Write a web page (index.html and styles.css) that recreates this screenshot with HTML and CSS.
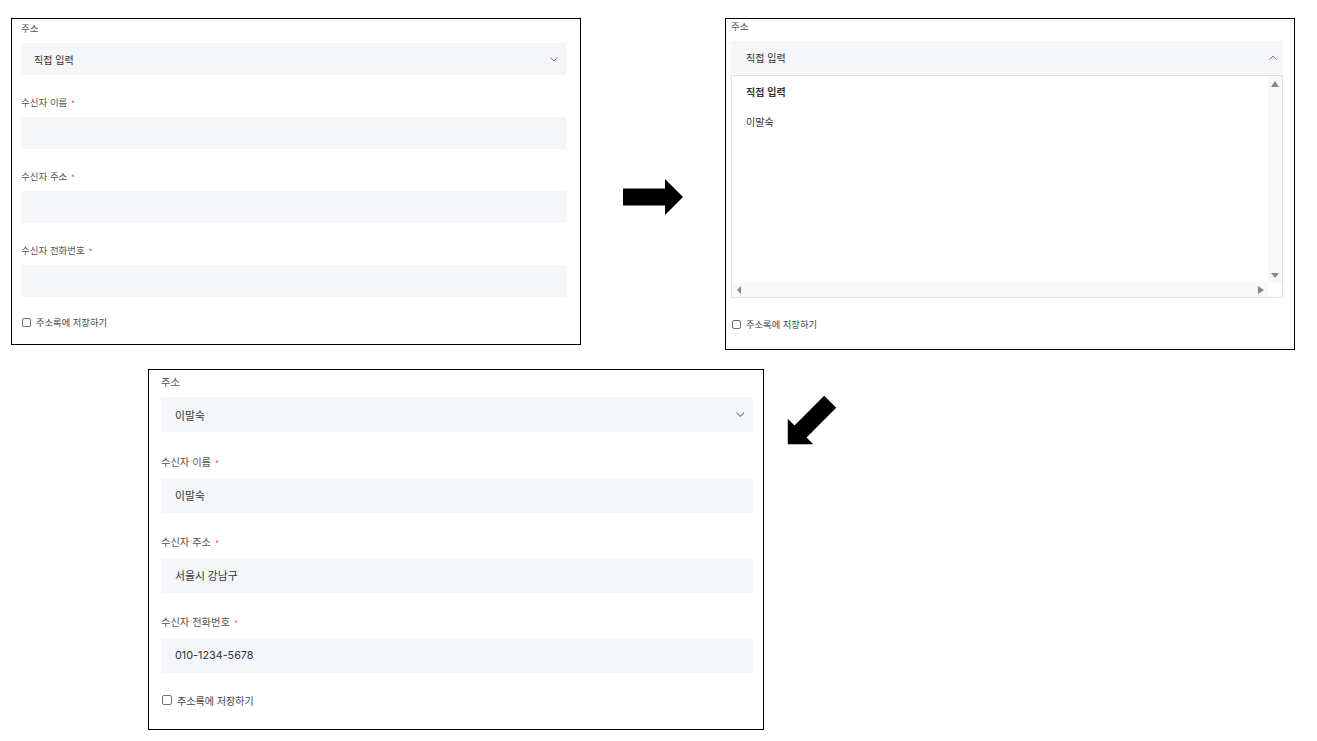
FILE: index.html
```html
<!DOCTYPE html>
<html lang="ko">
<head>
<meta charset="utf-8">
<title>주소 선택 흐름</title>
<link rel="stylesheet" href="styles.css">
</head>
<body>
<div class="canvas">

  <section class="panel p1">
    <div class="group">
      <div class="lbl">주소</div>
      <div class="field select"><span>직접 입력</span>
        <svg class="chev" viewBox="0 0 8 5"><polyline points="0.5,0.5 4,4 7.5,0.5"/></svg>
      </div>
    </div>
    <div class="group">
      <div class="lbl">수신자 이름 <span class="req">*</span></div>
      <div class="field"></div>
    </div>
    <div class="group">
      <div class="lbl">수신자 주소 <span class="req">*</span></div>
      <div class="field"></div>
    </div>
    <div class="group">
      <div class="lbl">수신자 전화번호 <span class="req">*</span></div>
      <div class="field"></div>
    </div>
    <div class="check"><span class="box"></span><span>주소록에 저장하기</span></div>
  </section>

  <section class="panel p2">
    <div class="group">
      <div class="lbl">주소</div>
      <div class="field select"><span>직접 입력</span>
        <svg class="chev" viewBox="0 0 8 5"><polyline points="0.5,4.5 4,1 7.5,4.5"/></svg>
      </div>
    </div>
    <div class="listbox">
      <div class="list-main">
        <div class="list-items">
          <div class="opt sel">직접 입력</div>
          <div class="opt">이말숙</div>
        </div>
        <div class="vbar">
          <span class="tri up"></span>
          <span class="tri down"></span>
        </div>
      </div>
      <div class="hrow">
        <div class="hbar">
          <span class="tri left"></span>
          <span class="tri right"></span>
        </div>
        <div class="corner"></div>
      </div>
    </div>
    <div class="check"><span class="box"></span><span>주소록에 저장하기</span></div>
  </section>

  <section class="panel p3">
    <div class="group">
      <div class="lbl">주소</div>
      <div class="field select"><span>이말숙</span>
        <svg class="chev" viewBox="0 0 8 5"><polyline points="0.5,0.5 4,4 7.5,0.5"/></svg>
      </div>
    </div>
    <div class="group">
      <div class="lbl">수신자 이름 <span class="req">*</span></div>
      <div class="field"><span>이말숙</span></div>
    </div>
    <div class="group">
      <div class="lbl">수신자 주소 <span class="req">*</span></div>
      <div class="field"><span>서울시 강남구</span></div>
    </div>
    <div class="group">
      <div class="lbl">수신자 전화번호 <span class="req">*</span></div>
      <div class="field"><span>010-1234-5678</span></div>
    </div>
    <div class="check"><span class="box"></span><span>주소록에 저장하기</span></div>
  </section>

  <svg class="arrow a1" width="62" height="37" viewBox="0 0 62 37"><polygon points="0,9.5 42,9.5 42,0 60,18 42,36 42,26.5 0,26.5"/></svg>
  <svg class="arrow a2" width="62" height="37" viewBox="0 0 62 37"><polygon points="0,9.5 42,9.5 42,0 60,18 42,36 42,26.5 0,26.5"/></svg>

</div>
</body>
</html>
```

FILE: styles.css
```css
html, body {
  margin: 0;
  padding: 0;
  background: #fff;
}

.canvas {
  position: relative;
  width: 1317px;
  height: 741px;
  overflow: hidden;
  font-family: Inter, "Noto Sans CJK KR", "Noto Sans", sans-serif;
  color: #333;
}

.panel {
  --s: 1;
  position: absolute;
  box-sizing: border-box;
  border: 1px solid #000;
  background: #fff;
  display: flex;
  flex-direction: column;
  gap: calc(var(--s) * 20px);
}

.p1 {
  left: 11px;
  top: 18px;
  width: 570px;
  height: 327px;
  padding: 2px 14px 0 9px;
}

.p2 {
  left: 725px;
  top: 18px;
  width: 570px;
  height: 332px;
  padding: 0 11px 0 5px;
  gap: 0;
}

.p3 {
  --s: 1.08;
  left: 148px;
  top: 369px;
  width: 616px;
  height: 361px;
  padding: 3.5px 10px 0 12px;
}

.group {
  display: flex;
  flex-direction: column;
  gap: calc(var(--s) * 8px);
}

.lbl {
  height: calc(var(--s) * 14px);
  font-family: "Noto Sans CJK KR", sans-serif;
  font-size: calc(var(--s) * 9.5px);
  line-height: calc(var(--s) * 14px);
  color: #555;
}

.req {
  color: #ee5b5b;
  font-size: calc(var(--s) * 8.5px);
  line-height: 0;
  margin-left: 1px;
  vertical-align: -1px;
}

.field {
  height: calc(var(--s) * 32px);
  flex-shrink: 0;
  background: #f5f6fa;
  display: flex;
  align-items: center;
  justify-content: space-between;
  padding: 0 calc(var(--s) * 8px) 0 calc(var(--s) * 13px);
  font-size: calc(var(--s) * 10px);
  color: #333;
}

.p3 .field {
  height: 35px;
}

.field span {
  font-family: Inter, "Noto Sans CJK KR", sans-serif;
}

.chev {
  width: calc(var(--s) * 8px);
  height: calc(var(--s) * 5px);
  fill: none;
  stroke: #7a7a7a;
  stroke-width: 1;
}

.p2 .field {
  height: 33px;
  padding-left: 15px;
  padding-right: 6px;
}

.check {
  display: flex;
  align-items: center;
  gap: calc(var(--s) * 5px);
  margin-top: calc(var(--s) * -2px);
  font-family: "Noto Sans CJK KR", sans-serif;
  font-size: calc(var(--s) * 9.3px);
  line-height: calc(var(--s) * 14px);
  color: #444;
}

.box {
  width: calc(var(--s) * 9px);
  height: calc(var(--s) * 9px);
  box-sizing: border-box;
  border: 1px solid #707070;
  border-radius: 2px;
  background: #fff;
  margin-left: 1px;
}

.p2 .check {
  margin-top: 19px;
}

/* open listbox */
.listbox {
  margin-top: 1px;
  height: 223px;
  box-sizing: border-box;
  border: 1px solid #e2e2e2;
  display: flex;
  flex-direction: column;
}

.list-main {
  flex: 1;
  display: flex;
}

.list-items {
  flex: 1;
}

.opt {
  height: 30px;
  display: flex;
  align-items: center;
  padding-left: 14px;
  font-family: "Noto Sans CJK KR", sans-serif;
  font-size: 10px;
  color: #333;
}

.opt.sel {
  font-weight: 700;
}

.vbar {
  width: 14px;
  background: #f8f8f8;
  display: flex;
  flex-direction: column;
  justify-content: space-between;
  align-items: center;
  padding: 5px 0 5px;
}

.hrow {
  height: 14px;
  display: flex;
}

.hbar {
  flex: 1;
  background: #f8f8f8;
  display: flex;
  align-items: center;
  justify-content: space-between;
  padding: 0 4px 0 5px;
}

.corner {
  width: 14px;
  background: #fff;
}

.tri {
  width: 0;
  height: 0;
  border-style: solid;
}

.tri.up {
  border-width: 0 4px 6px 4px;
  border-color: transparent transparent #888 transparent;
}

.tri.down {
  border-width: 5px 4px 0 4px;
  border-color: #888 transparent transparent transparent;
}

.tri.left {
  border-width: 4px 4px 4px 0;
  border-color: transparent #888 transparent transparent;
}

.tri.right {
  border-width: 4px 0 4px 6px;
  border-color: transparent transparent transparent #888;
}

/* arrows between the screenshots */
.arrow {
  position: absolute;
  fill: #000;
  overflow: visible;
}

.a1 {
  left: 623px;
  top: 179px;
}

.a2 {
  left: 779px;
  top: 405px;
  transform-origin: 30px 18px;
  transform: rotate(135deg);
}
```
